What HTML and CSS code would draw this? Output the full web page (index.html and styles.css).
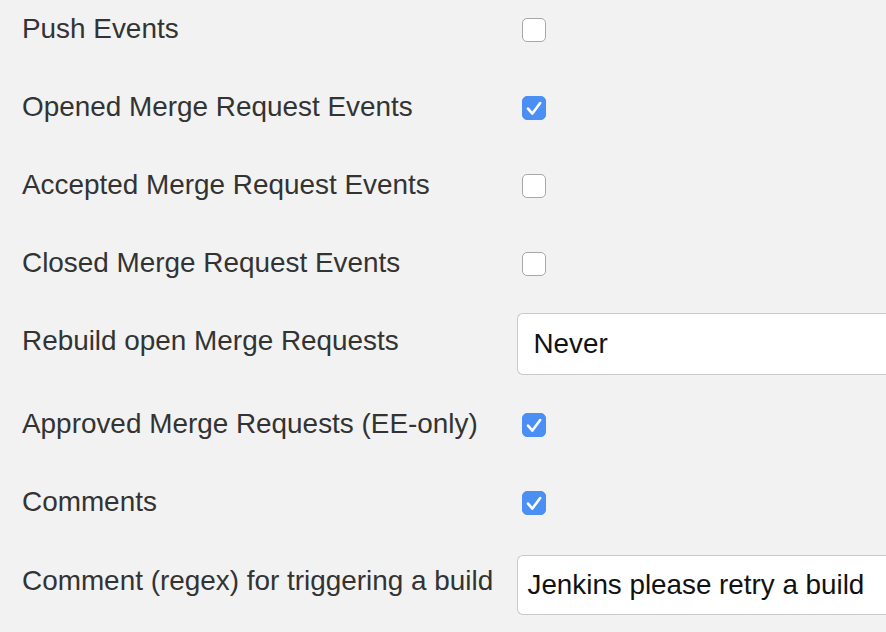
FILE: index.html
```html
<!DOCTYPE html>
<html lang="en">
<head>
<meta charset="utf-8">
<title>Trigger settings</title>
<link rel="stylesheet" href="styles.css">
</head>
<body>
<form class="settings">
  <div class="row row-check row-first">
    <span class="label">Push Events</span>
    <span class="box"></span>
  </div>
  <div class="row row-check">
    <span class="label">Opened Merge Request Events</span>
    <span class="box checked"><svg viewBox="0 0 24 24" width="24" height="24"><path d="M6 12.6 L10.4 17.6 L18.2 7" fill="none" stroke="#fff" stroke-width="2.6" stroke-linecap="round" stroke-linejoin="round"/></svg></span>
  </div>
  <div class="row row-check">
    <span class="label">Accepted Merge Request Events</span>
    <span class="box"></span>
  </div>
  <div class="row row-check">
    <span class="label">Closed Merge Request Events</span>
    <span class="box"></span>
  </div>
  <div class="row row-select">
    <span class="label">Rebuild open Merge Requests</span>
    <div class="field select">Never</div>
  </div>
  <div class="row row-check row-after-select">
    <span class="label">Approved Merge Requests (EE-only)</span>
    <span class="box checked"><svg viewBox="0 0 24 24" width="24" height="24"><path d="M6 12.6 L10.4 17.6 L18.2 7" fill="none" stroke="#fff" stroke-width="2.6" stroke-linecap="round" stroke-linejoin="round"/></svg></span>
  </div>
  <div class="row row-check">
    <span class="label">Comments</span>
    <span class="box checked"><svg viewBox="0 0 24 24" width="24" height="24"><path d="M6 12.6 L10.4 17.6 L18.2 7" fill="none" stroke="#fff" stroke-width="2.6" stroke-linecap="round" stroke-linejoin="round"/></svg></span>
  </div>
  <div class="row row-input">
    <span class="label">Comment (regex) for triggering a build</span>
    <div class="field input">Jenkins please retry a build</div>
  </div>
</form>
</body>
</html>
```

FILE: styles.css
```css
html, body {
  margin: 0;
  padding: 0;
  overflow: hidden;
  background: #f2f2f2;
}

body {
  font-family: "Liberation Sans", Arial, Helvetica, sans-serif;
  color: #333;
  width: 886px;
  height: 632px;
}

.settings {
  box-sizing: border-box;
  width: 886px;
  display: flex;
  flex-direction: column;
  padding-left: 22px;
}

.row {
  display: flex;
  align-items: flex-start;
}

.label {
  flex: 0 0 495px;
  padding-top: 1px;
  font-size: 27.9px;
  line-height: 32px;
  white-space: nowrap;
}

.row-check {
  margin-top: 46px;
  height: 32px;
}

.row-first {
  margin-top: 12px;
}

.row-select {
  margin-top: 35px;
}

.row-select .label {
  margin-top: 11px;
}

.row-after-select {
  margin-top: 32px;
}

.row-input {
  margin-top: 38px;
}

.row-input .label {
  margin-top: 9px;
}

.box {
  box-sizing: border-box;
  flex: 0 0 24px;
  width: 24px;
  height: 24px;
  margin-top: 6px;
  margin-left: 5px;
  border: 1.5px solid #a8a8a8;
  border-radius: 5px;
  background: #fff;
  position: relative;
}

.box.checked {
  border-color: #4b8ff4;
  background: #4b8ff4;
}

.box svg {
  position: absolute;
  left: -1.5px;
  top: -1.5px;
  display: block;
}

.field {
  box-sizing: border-box;
  flex: 1 1 auto;
  min-width: 0;
  overflow: hidden;
  display: flex;
  align-items: center;
  background: #fff;
  border: 1.5px solid #cacaca;
  border-right: none;
  border-radius: 6px 0 0 6px;
  font-size: 27.8px;
  color: #111;
  white-space: nowrap;
}

.select {
  height: 62px;
  padding-left: 15.5px;
}

.input {
  height: 60px;
  padding-left: 9.5px;
}
```
